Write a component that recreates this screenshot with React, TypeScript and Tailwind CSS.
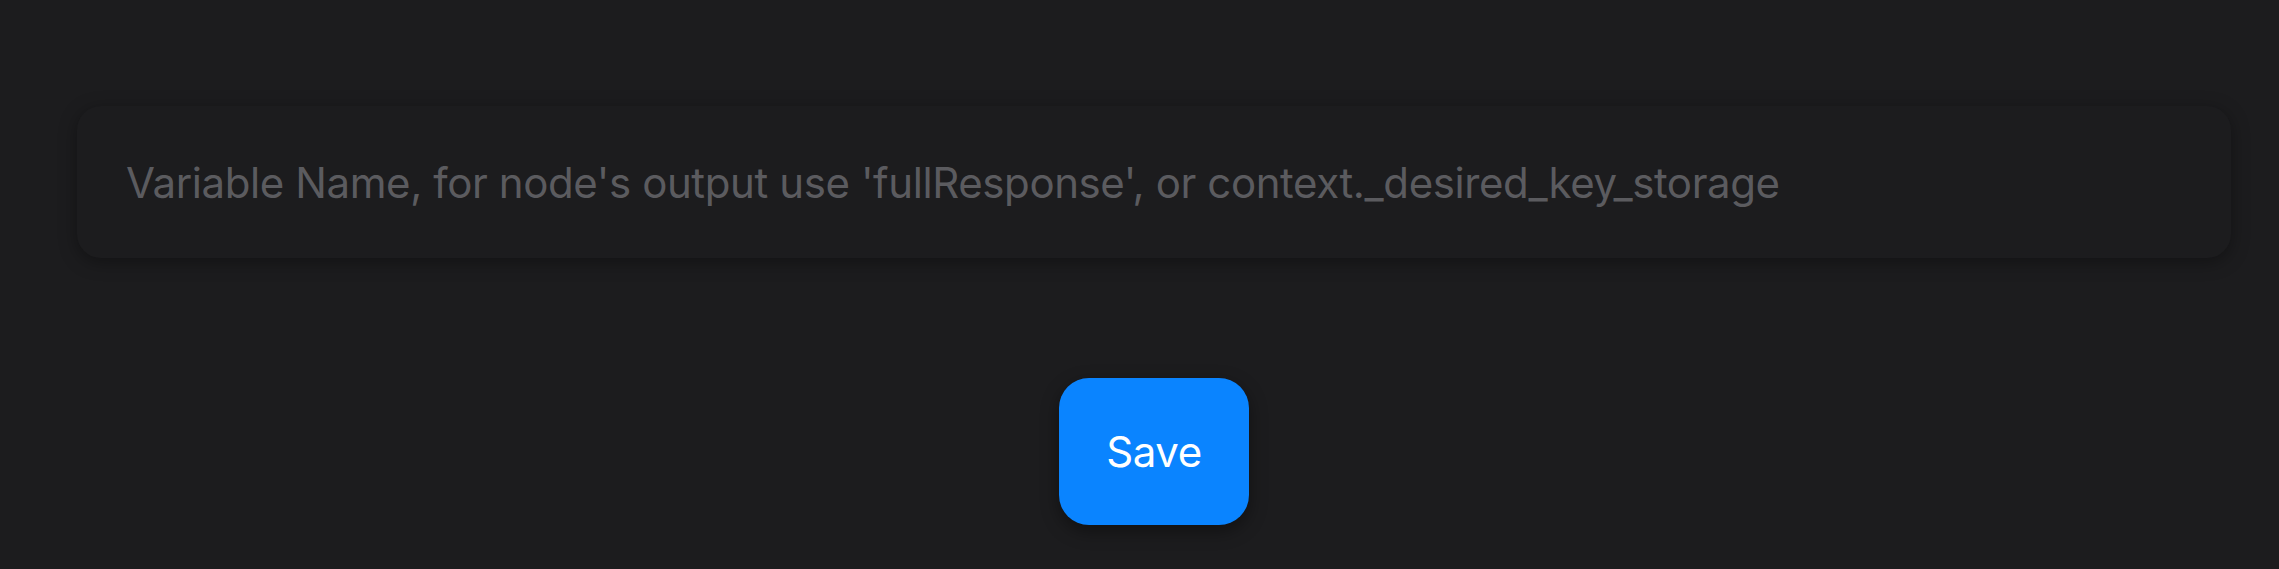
export default function App() {
  return (
    <div
      className="w-full h-[569px] bg-[#1c1c1e] flex flex-col pl-[77px] pr-[48px] pt-[106px]"
      style={{ fontFamily: "Inter, 'Noto Sans', sans-serif" }}
    >
      <div className="h-[152px] w-full rounded-[24px] bg-[#1c1c1e] shadow-[0_4px_18px_rgba(0,0,0,0.35)] flex items-center pl-[49px]">
        <input
          className="w-full bg-transparent outline-none text-[42px] text-[#d1d1d6] placeholder:text-[#5b5b5f] tracking-[-0.4px]"
          placeholder="Variable Name, for node's output use 'fullResponse', or context._desired_key_storage"
        />
      </div>
      <div className="flex justify-center mt-[120px]">
        <button className="w-[190px] h-[147px] rounded-[30px] bg-[#0a84ff] text-white text-[42px] tracking-[-0.4px] shadow-[0_6px_18px_rgba(0,0,0,0.4)]">
          Save
        </button>
      </div>
    </div>
  );
}
